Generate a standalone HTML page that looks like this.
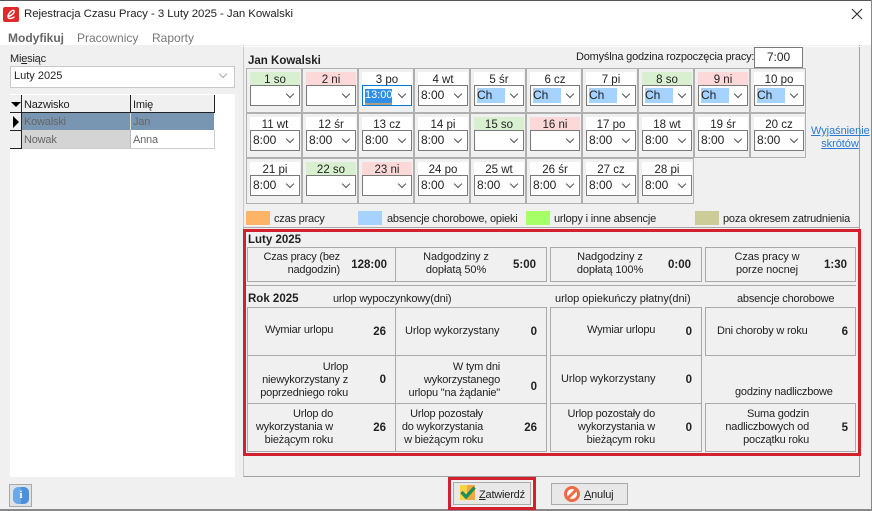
<!DOCTYPE html>
<html lang="pl">
<head>
<meta charset="utf-8">
<title>Rejestracja Czasu Pracy</title>
<style>
html,body{margin:0;padding:0;background:#f0f0f0;}
#w{position:relative;width:872px;height:511px;overflow:hidden;background:#f0f0f0;font:11px/14px "Liberation Sans",sans-serif;letter-spacing:-.2px;color:#222;}
#w div,#w span.a{position:absolute;white-space:nowrap;box-sizing:border-box;}
.c{width:56px;border:1px solid #b0b0b0;}
.l{left:3px;top:3px;width:50px;height:14px;background:#fff;text-align:center;line-height:16px;font-size:11.5px;letter-spacing:0;}
.g{background:#d9f0d0;}
.r{background:#fdd8d8;}
.s{left:3px;top:16px;width:50px;height:21px;background:#fff;border:1px solid #7a7a7a;line-height:19px;padding-left:2px;font-size:12px;letter-spacing:0;}
.s i{position:absolute;right:6px;top:5px;width:5px;height:5px;border-right:1px solid #555;border-bottom:1px solid #555;transform:rotate(45deg);}
.s b{position:absolute;left:2px;top:2px;width:28px;height:15px;background:#a6d2ff;font-weight:normal;line-height:15px;}
.b{border:1px solid #a9a9a9;}
.t{text-align:right;line-height:13px;}
.m{text-align:center;line-height:13px;letter-spacing:-.08px;}
.v{font-weight:bold;text-align:right;line-height:14px;font-size:11.5px;letter-spacing:0;}
.h{font-weight:bold;font-size:11.5px;letter-spacing:0;}
.sw{height:14px;width:24px;top:211px;}
.red{border:3px solid #d3202e;}
.w{letter-spacing:-.05px;}
</style>
</head>
<body>
<div id="w">
  <div style="left:0;top:0;width:872px;height:1px;background:#555"></div>
  <div style="left:0;top:1px;width:871px;height:44px;background:#fff"></div>
  <div style="left:871px;top:0;width:1px;height:510px;background:#888"></div>
  <div style="left:0;top:509px;width:872px;height:2px;background:#888"></div>

  <svg style="position:absolute;left:3px;top:7px" width="16" height="15" viewBox="0 0 16 15"><rect width="16" height="15" rx="2" fill="#e02a2a"/><path d="M5 9.5C8 9 12 6 11 3.8C10 2.2 6.2 5 5 9C4.4 12 8 12.2 11.5 9.8" stroke="#fff" stroke-width="1.4" fill="none"/></svg>
  <div style="left:24px;top:7px;font-size:11.45px;letter-spacing:-.06px">Rejestracja Czasu Pracy - 3 Luty 2025 - Jan Kowalski</div>
  <svg style="position:absolute;left:851px;top:8px" width="12" height="12" viewBox="0 0 12 12"><path d="M1 1L11 11M11 1L1 11" stroke="#222" stroke-width="1" fill="none"/></svg>

  <div style="left:8px;top:31px;font-weight:bold;color:#666;font-size:12px;letter-spacing:0">Modyfikuj</div>
  <div style="left:77px;top:31px;color:#777;font-size:12px;letter-spacing:0">Pracownicy</div>
  <div style="left:152px;top:31px;color:#777;font-size:12px;letter-spacing:0">Raporty</div>

  <div style="left:10px;top:52px">Mi<u>e</u>siąc</div>
  <div style="left:10px;top:66px;width:225px;height:22px;background:#fff;border:1px solid #c8c8c8;line-height:19px;padding-left:3px;letter-spacing:0">Luty 2025<div style="right:8px;top:4px;width:6px;height:6px;border-right:1px solid #aaa;border-bottom:1px solid #aaa;transform:rotate(45deg)"></div></div>

  <div style="left:10px;top:94px;width:225px;height:383px;background:#fff"></div>
  <div style="left:10px;top:95px;width:12px;height:18px;background:#f0f0f0;border-right:1px solid #222;border-bottom:1px solid #222"></div>
  <div style="left:11px;top:102px;width:0;height:0;border-left:5px solid transparent;border-right:5px solid transparent;border-top:5px solid #000"></div>
  <div style="left:22px;top:95px;width:109px;height:18px;background:#f0f0f0;border-right:1px solid #222;border-bottom:1px solid #222;padding-left:2px;line-height:20px">Nazwisko</div>
  <div style="left:131px;top:95px;width:84px;height:18px;background:#f0f0f0;border-right:1px solid #222;border-bottom:1px solid #222;padding-left:2px;line-height:20px">Imię</div>
  <div style="left:10px;top:113px;width:12px;height:18px;background:#f0f0f0;border-right:1px solid #222;border-bottom:1px solid #222"></div>
  <div style="left:13px;top:116px;width:0;height:0;border-top:6px solid transparent;border-bottom:6px solid transparent;border-left:6px solid #000"></div>
  <div style="left:22px;top:113px;width:109px;height:17px;background:#7895b2;color:#666;padding-left:2px;line-height:19px;border-right:1px solid #ddd">Kowalski</div>
  <div style="left:131px;top:113px;width:83px;height:17px;background:#7895b2;color:#666;padding-left:2px;line-height:19px">Jan</div>
  <div style="left:10px;top:131px;width:12px;height:18px;background:#f0f0f0;border-right:1px solid #222;border-bottom:1px solid #222"></div>
  <div style="left:22px;top:130px;width:109px;height:19px;background:#d4d4d4;color:#666;padding-left:2px;line-height:21px;border-right:1px solid #bbb;border-bottom:1px solid #ccc">Nowak</div>
  <div style="left:131px;top:130px;width:84px;height:19px;background:#fff;color:#666;padding-left:2px;line-height:21px;border-right:1px solid #ccc;border-bottom:1px solid #ccc">Anna</div>

  <div style="left:243px;top:45px;width:617px;height:432px;border-left:1px solid #c8c8c8;border-right:1px solid #a0a0a0;border-bottom:1px solid #a0a0a0"></div>
  <div style="left:243px;top:46px;width:617px;height:1px;background:#fff"></div>
  <div style="left:248px;top:54px" class="h">Jan Kowalski</div>
  <div style="left:576px;top:50px">Domyślna <u>g</u>odzina rozpoczęcia pracy:</div>
  <div style="left:754px;top:47px;width:49px;height:21px;background:#fff;border:1px solid #7a7a7a;text-align:center;line-height:19px;font-size:12px;letter-spacing:0">7:00</div>

  <div class="c" style="left:246px;top:68px;height:45px"><div class="l g">1 so</div><div class="s"><i></i></div></div>
  <div class="c" style="left:302px;top:68px;height:45px"><div class="l r">2 ni</div><div class="s"><i></i></div></div>
  <div class="c" style="left:358px;top:68px;height:45px"><div class="l">3 po</div><div class="s" style="border-color:#0078d7"><i></i><b style="background:#2f8fe8;color:#fff;left:2px;top:3px;width:27px;height:14px;border-bottom:2px solid #b0a080;line-height:12px;font-size:11px">13:00</b></div></div>
  <div class="c" style="left:414px;top:68px;height:45px"><div class="l">4 wt</div><div class="s">8:00<i></i></div></div>
  <div class="c" style="left:470px;top:68px;height:45px"><div class="l">5 śr</div><div class="s"><b>Ch</b><i></i></div></div>
  <div class="c" style="left:526px;top:68px;height:45px"><div class="l">6 cz</div><div class="s"><b>Ch</b><i></i></div></div>
  <div class="c" style="left:582px;top:68px;height:45px"><div class="l">7 pi</div><div class="s"><b>Ch</b><i></i></div></div>
  <div class="c" style="left:638px;top:68px;height:45px"><div class="l g">8 so</div><div class="s"><b>Ch</b><i></i></div></div>
  <div class="c" style="left:694px;top:68px;height:45px"><div class="l r">9 ni</div><div class="s"><b>Ch</b><i></i></div></div>
  <div class="c" style="left:750px;top:68px;height:45px"><div class="l">10 po</div><div class="s"><b>Ch</b><i></i></div></div>

  <div class="c" style="left:246px;top:113px;height:45px"><div class="l">11 wt</div><div class="s">8:00<i></i></div></div>
  <div class="c" style="left:302px;top:113px;height:45px"><div class="l">12 śr</div><div class="s">8:00<i></i></div></div>
  <div class="c" style="left:358px;top:113px;height:45px"><div class="l">13 cz</div><div class="s">8:00<i></i></div></div>
  <div class="c" style="left:414px;top:113px;height:45px"><div class="l">14 pi</div><div class="s">8:00<i></i></div></div>
  <div class="c" style="left:470px;top:113px;height:45px"><div class="l g">15 so</div><div class="s"><i></i></div></div>
  <div class="c" style="left:526px;top:113px;height:45px"><div class="l r">16 ni</div><div class="s"><i></i></div></div>
  <div class="c" style="left:582px;top:113px;height:45px"><div class="l">17 po</div><div class="s">8:00<i></i></div></div>
  <div class="c" style="left:638px;top:113px;height:45px"><div class="l">18 wt</div><div class="s">8:00<i></i></div></div>
  <div class="c" style="left:694px;top:113px;height:45px"><div class="l">19 śr</div><div class="s">8:00<i></i></div></div>
  <div class="c" style="left:750px;top:113px;height:45px"><div class="l">20 cz</div><div class="s">8:00<i></i></div></div>

  <div class="c" style="left:246px;top:158px;height:46px"><div class="l">21 pi</div><div class="s">8:00<i></i></div></div>
  <div class="c" style="left:302px;top:158px;height:46px"><div class="l g">22 so</div><div class="s"><i></i></div></div>
  <div class="c" style="left:358px;top:158px;height:46px"><div class="l r">23 ni</div><div class="s"><i></i></div></div>
  <div class="c" style="left:414px;top:158px;height:46px"><div class="l">24 po</div><div class="s">8:00<i></i></div></div>
  <div class="c" style="left:470px;top:158px;height:46px"><div class="l">25 wt</div><div class="s">8:00<i></i></div></div>
  <div class="c" style="left:526px;top:158px;height:46px"><div class="l">26 śr</div><div class="s">8:00<i></i></div></div>
  <div class="c" style="left:582px;top:158px;height:46px"><div class="l">27 cz</div><div class="s">8:00<i></i></div></div>
  <div class="c" style="left:638px;top:158px;height:46px"><div class="l">28 pi</div><div class="s">8:00<i></i></div></div>

  <div style="left:811px;top:125px;width:58px;text-align:center;color:#2a7ad5;text-decoration:underline;line-height:13px;letter-spacing:-.05px">Wyjaśnienie<br>skrótów</div>

  <div class="sw" style="left:246px;background:#ffb366;border-radius:1px"></div><div style="left:274px;top:212px">czas pracy</div>
  <div class="sw" style="left:358px;background:#a6d2ff"></div><div style="left:387px;top:212px">absencje chorobowe, opieki</div>
  <div class="sw" style="left:526px;background:#a6ff66"></div><div style="left:554px;top:212px">urlopy i inne absencje</div>
  <div class="sw" style="left:695px;background:#cccc99"></div><div style="left:723px;top:212px">poza okresem zatrudnienia</div>

  <div style="left:243px;top:227px;width:617px;height:1px;background:#aaa"></div>
  <div class="red" style="left:243px;top:229px;width:618px;height:227px"></div>

  <div class="h" style="left:248px;top:233px">Luty 2025</div>
  <div class="b" style="left:247px;top:247px;width:149px;height:35px"></div>
  <div class="b" style="left:395px;top:247px;width:152px;height:35px"></div>
  <div class="b" style="left:550px;top:247px;width:152px;height:35px"></div>
  <div class="b" style="left:705px;top:247px;width:151px;height:35px"></div>
  <div class="t" style="left:250px;top:251px;width:90px">Czas pracy (bez<br>nadgodzin)</div>
  <div class="v" style="left:340px;top:258px;width:47px">128:00</div>
  <div class="m" style="left:406px;top:251px;width:100px">Nadgodziny z<br>dopłatą 50%</div>
  <div class="v" style="left:499px;top:258px;width:37px">5:00</div>
  <div class="m" style="left:560px;top:251px;width:100px">Nadgodziny z<br>dopłatą 100%</div>
  <div class="v" style="left:655px;top:258px;width:36px">0:00</div>
  <div class="m" style="left:717px;top:251px;width:100px">Czas pracy w<br>porze nocnej</div>
  <div class="v" style="left:810px;top:258px;width:37px">1:30</div>

  <div style="left:246px;top:285px;width:610px;height:1px;background:#aaa"></div>
  <div class="h" style="left:248px;top:292px">Rok 2025</div>
  <div style="left:333px;top:292px">urlop wypoczynkowy(dni)</div>
  <div class="w" style="left:555px;top:292px">urlop opiekuńczy płatny(dni)</div>
  <div style="left:737px;top:292px">absencje chorobowe</div>

  <div class="b" style="left:247px;top:307px;width:149px;height:49px"></div>
  <div class="b" style="left:395px;top:307px;width:152px;height:49px"></div>
  <div class="b" style="left:550px;top:307px;width:152px;height:49px"></div>
  <div class="b" style="left:705px;top:307px;width:151px;height:49px"></div>
  <div class="b" style="left:247px;top:355px;width:149px;height:49px"></div>
  <div class="b" style="left:395px;top:355px;width:152px;height:49px"></div>
  <div class="b" style="left:550px;top:355px;width:152px;height:49px"></div>
  <div class="b" style="left:247px;top:403px;width:149px;height:49px"></div>
  <div class="b" style="left:395px;top:403px;width:152px;height:49px"></div>
  <div class="b" style="left:550px;top:403px;width:152px;height:49px"></div>
  <div class="b" style="left:705px;top:403px;width:151px;height:49px"></div>

  <div style="left:265px;top:323px">Wymiar urlopu</div>
  <div class="v" style="left:346px;top:325px;width:40px">26</div>
  <div class="w" style="left:405px;top:324px">Urlop wykorzystany</div>
  <div class="v" style="left:497px;top:325px;width:40px">0</div>
  <div style="left:587px;top:323px">Wymiar urlopu</div>
  <div class="v" style="left:652px;top:325px;width:40px">0</div>
  <div style="left:717px;top:324px">Dni choroby w roku</div>
  <div class="v" style="left:808px;top:325px;width:40px">6</div>

  <div class="t" style="left:250px;top:361px;width:98px">Urlop<br>niewykorzystany z<br>poprzedniego roku</div>
  <div class="v" style="left:346px;top:373px;width:40px">0</div>
  <div class="t" style="left:400px;top:361px;width:100px">W tym dni<br>wykorzystanego<br>urlopu "na żądanie"</div>
  <div class="v" style="left:497px;top:380px;width:40px">0</div>
  <div class="w" style="left:561px;top:372px">Urlop wykorzystany</div>
  <div class="v" style="left:652px;top:373px;width:40px">0</div>
  <div style="left:735px;top:385px">godziny nadliczbowe</div>

  <div class="t" style="left:250px;top:408px;width:83px">Urlop do<br>wykorzystania w<br>bieżącym roku</div>
  <div class="v" style="left:346px;top:421px;width:40px">26</div>
  <div class="t" style="left:400px;top:408px;width:83px">Urlop pozostały<br>do wykorzystania<br>w bieżącym roku</div>
  <div class="v" style="left:497px;top:421px;width:40px">26</div>
  <div class="t" style="left:560px;top:408px;width:95px">Urlop pozostały do<br>wykorzystania w<br>bieżącym roku</div>
  <div class="v" style="left:652px;top:421px;width:40px">0</div>
  <div class="t" style="left:720px;top:408px;width:89px">Suma godzin<br>nadliczbowych od<br>początku roku</div>
  <div class="v" style="left:808px;top:421px;width:40px">5</div>

  <!-- info button -->
  <div style="left:9px;top:484px;width:23px;height:23px;background:#dfe3e8;border:1px solid #a8a8a8"></div>
  <div style="left:13px;top:487px;width:16px;height:17px;background:linear-gradient(90deg,#6aa9e6 50%,#4a90dc 50%);border-radius:5px;color:#fff;font:bold 11px/17px 'Liberation Serif',serif;text-align:center;letter-spacing:0">i</div>

  <!-- Zatwierdź -->
  <div class="red" style="left:448px;top:477px;width:88px;height:33px"></div>
  <div style="left:453px;top:482px;width:78px;height:23px;background:#e8e8e8;border:1px solid #aaa"></div>
  <div style="left:460px;top:485px;width:7px;height:15px;background:#ffd23f"></div>
  <div style="left:467px;top:485px;width:8px;height:15px;background:#f5a742"></div>
  <svg style="position:absolute;left:458px;top:484px" width="18" height="16" viewBox="0 0 18 16"><path d="M3.5 8L8 13L16.5 3.5" stroke="#1b8f5a" stroke-width="3.4" fill="none"/></svg>
  <div style="left:479px;top:488px"><u>Z</u>atwierdź</div>

  <!-- Anuluj -->
  <div style="left:551px;top:483px;width:77px;height:22px;background:#e8e8e8;border:1px solid #aaa"></div>
  <svg style="position:absolute;left:564px;top:486px" width="17" height="17" viewBox="0 0 17 17"><circle cx="8" cy="8" r="6.5" fill="#fff" stroke="#ee6a44" stroke-width="3"/><path d="M3.5 12.5L12.5 3.5" stroke="#ee6a44" stroke-width="3"/></svg>
  <div style="left:584px;top:488px"><u>A</u>nuluj</div>
</div>
</body>
</html>
